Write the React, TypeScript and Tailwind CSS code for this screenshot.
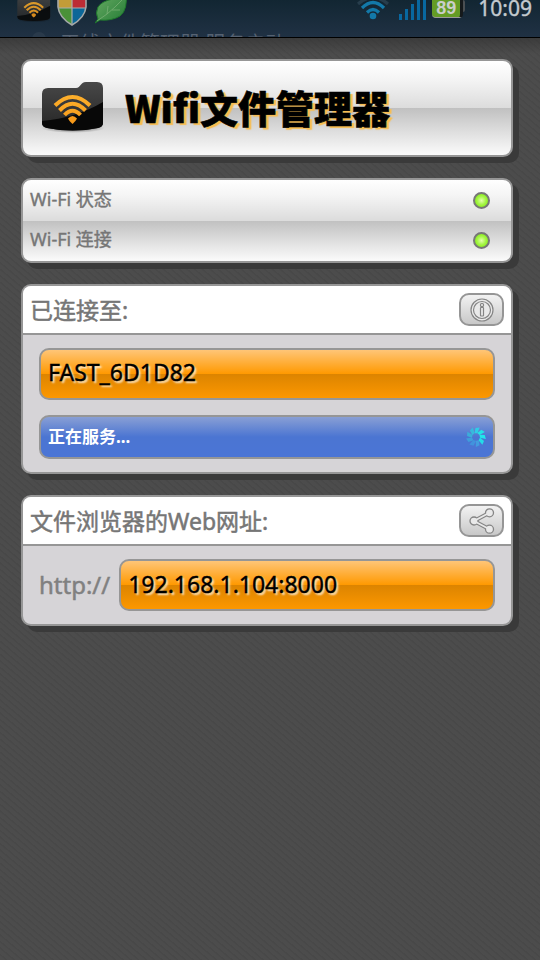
import type { ReactNode } from 'react';

const card =
  'overflow-hidden rounded-[10px] border-2 border-[#969696] shadow-[6px_6px_0_#3a3a3a]';
const gloss =
  'bg-[linear-gradient(to_bottom,#ffffff_0%,#f4f4f4_20%,#dcdcdc_50%,#c0c0c0_50%,#dedede_75%,#fbfbfb_100%)]';
const orange =
  'h-[52px] min-w-0 rounded-[10px] border-2 border-[#969696] bg-[linear-gradient(to_bottom,#ffc981_0%,#ff9900_50%,#dc8400_50%,#ff9900_100%)] bg-origin-border px-[7px] pb-[3px] text-[23px] leading-[45px] text-black [-webkit-text-stroke:0.4px_#000] [text-shadow:2px_2px_2px_#ffffffcc]';

function FolderWifi({ id, className }: { id: string; className: string }) {
  return (
    <svg viewBox="0 0 66 52" className={className} aria-hidden="true">
      <defs>
        <linearGradient id={`${id}-body`} x1="0" y1="0" x2="0" y2="1">
          <stop offset="0" stopColor="#484848" />
          <stop offset="1" stopColor="#252525" />
        </linearGradient>
        <linearGradient id={`${id}-wave`} gradientUnits="userSpaceOnUse" x1="0" y1="12" x2="0" y2="42">
          <stop offset="0" stopColor="#fdb02c" />
          <stop offset="1" stopColor="#f79a1a" />
        </linearGradient>
        <radialGradient id={`${id}-glow`}>
          <stop offset="0" stopColor="#000" stopOpacity="0.6" />
          <stop offset="1" stopColor="#000" stopOpacity="0" />
        </radialGradient>
      </defs>
      <ellipse cx="33" cy="46" rx="32" ry="5" fill={`url(#${id}-glow)`} />
      <path
        d="M2 12Q2 6 8 6H36C41 6 40 0 46 0H57Q63 0 63 6V41Q63 45 58 46Q33 51 7 46Q2 45 2 41Z"
        fill={`url(#${id}-body)`}
      />
      <path d="M2 39Q36 36 63 20V41Q63 45 58 46Q33 51 7 46Q2 45 2 41Z" fill="#080808" />
      <g fill="none" stroke={`url(#${id}-wave)`} strokeWidth="4">
        <path d="M15 23.500Q32.500 6.500 50 23.500" />
        <path d="M19.500 28.500Q32.500 15 45.500 28.500" />
        <path d="M24.500 33Q32.500 24.500 40.500 33" />
      </g>
      <path d="M28 36.500Q32.500 31.500 37 36.500Q36 39 32.500 42Q29 39 28 36.500Z" fill="#f79a1a" />
    </svg>
  );
}

function Shield() {
  return (
    <svg width="30" height="32" viewBox="0 0 30 32" aria-hidden="true">
      <clipPath id="shield-shape">
        <path d="M1 0H29V13C28 22 22 27 15 31C8 27 2 22 1 13Z" />
      </clipPath>
      <g clipPath="url(#shield-shape)">
        <path d="M0 0H15V14H0Z" fill="#c39c38" />
        <path d="M15 0H30V14H15Z" fill="#bc2c35" />
        <path d="M0 14H15V32H0Z" fill="#4a9138" />
        <path d="M15 14H30V32H15Z" fill="#0c6798" />
        <path d="M15 0V32M0 14H30" stroke="#a9adad" strokeWidth="1.200" />
      </g>
      <path d="M1 0V13C2 22 8 27 15 31C22 27 28 22 29 13V0" fill="none" stroke="#a4a8a8" strokeWidth="1.600" />
    </svg>
  );
}

function Leaf() {
  return (
    <svg width="34" height="30" viewBox="0 0 34 30" aria-hidden="true">
      <defs>
        <linearGradient id="leaf-fill" x1="0" y1="0" x2="1" y2="1">
          <stop offset="0" stopColor="#6cae66" />
          <stop offset="1" stopColor="#237b35" />
        </linearGradient>
      </defs>
      <path d="M0 29L3 25Q0 19 3 13Q7 7 18 5L31 -2Q33 16 25 22Q17 27 5 26Z" fill="url(#leaf-fill)" stroke="#1f7a2c" />
      <path d="M2 27Q13 20 20 13L30 3M12 20L13 12M17 16L25 16" fill="none" stroke="#79b075" strokeWidth="0.800" />
    </svg>
  );
}

function StatusBar() {
  return (
    <header className="relative h-[38px] overflow-hidden border-b border-black bg-[linear-gradient(to_bottom,#122632,#203144)]">
      <div className="flex h-9 items-start justify-between pr-2 pl-4">
        <div className="flex items-start">
          <FolderWifi id="notice" className="-mt-[5px] h-[28px] w-[36px] opacity-85" />
          <div className="-mt-1.5 ml-[5px]"><Shield /></div>
          <div className="-mt-1.5 ml-2"><Leaf /></div>
        </div>
        <div className="flex items-start">
          <svg width="32" height="20" viewBox="0 0 32 20" fill="none" strokeWidth="3.200" aria-label="Wi-Fi">
            <path d="M1 4Q16 -9 31 4" stroke="#273d4c" />
            <path d="M5 8Q16 -3 27 8" stroke="#1379a9" />
            <path d="M10 12.500Q16 6.500 22 12.500" stroke="#1379a9" />
            <circle cx="16" cy="16" r="3.300" fill="#1379a9" />
          </svg>
          <svg width="28" height="20" viewBox="0 0 28 20" fill="#0868a0" className="ml-[9px]" aria-label="signal">
            <path d="M1 14H4V20H1ZM7 9H10V20H7ZM13 4H16V20H13ZM19 0H22V20H19ZM25 0H28V20H25Z" />
          </svg>
          <div className="ml-[6px] flex items-start">
            <div className="h-[18px] w-[31px] rounded-b-sm border-r-[3px] border-b border-r-[#15191b] border-b-[#9a9a9a] bg-[#649c25] text-center font-['Liberation_Sans',sans-serif] text-[18px] leading-4 font-bold text-[#c9cec9]">89</div>
            <div className="h-3 w-0.5 rounded-r bg-[#4a4f52]" />
          </div>
          <time className="-mt-1 ml-[13px] text-[21px] leading-6 text-[#c3c9ce] [-webkit-text-stroke:0.4px_#c3c9ce]">10:09</time>
        </div>
      </div>
      <div className="absolute top-[32px] left-8 flex items-start gap-[14px]">
        <span className="h-5 w-3.5 rounded-full bg-[#2a3a4b]" />
        <p className="text-[20px] leading-6 whitespace-nowrap text-[#566272]">无线文件管理器 服务启动</p>
      </div>
    </header>
  );
}

function StatusRow({ label }: { label: string }) {
  return (
    <li className="flex h-10 items-center justify-between pr-[21px] pl-[7px] text-[18px] leading-6 text-[#767676] [-webkit-text-stroke:0.4px_#767676]">
      <span className="pb-0.5">{label}</span>
      <span className="size-[17px] rounded-full border-2 border-[#777777] bg-[radial-gradient(circle,#e4ffac_0%,#a6f647_45%,#8bed20_75%)]" />
    </li>
  );
}

function Panel({ title, action, icon, children }: { title: string; action: string; icon: ReactNode; children: ReactNode }) {
  return (
    <section className={`${card} bg-[#d6d4d7]`}>
      <div className="flex h-[49px] items-center justify-between border-b-2 border-[#969696] bg-white px-[7px]">
        <h2 className="text-[23px] leading-8 text-[#767676] [-webkit-text-stroke:0.5px_#767676]">{title}</h2>
        <button
          type="button"
          aria-label={action}
          className="flex h-[33px] w-[45px] items-center justify-center rounded-[10px] border-2 border-[#969696] bg-[linear-gradient(to_bottom,#f2f2f2,#c8c8c8)]"
        >
          {icon}
        </button>
      </div>
      <div className="flex flex-col gap-[15px] px-4 py-[13px]">{children}</div>
    </section>
  );
}

function InfoIcon() {
  return (
    <svg width="24" height="24" viewBox="0 0 24 24" fill="#e9e9e9" stroke="#858585" strokeWidth="1.200">
      <circle cx="12" cy="12" r="11" />
      <circle cx="12" cy="12" r="8.500" />
      <rect x="10.500" y="5.500" width="3" height="3" rx="1" />
      <rect x="10.500" y="9.500" width="3" height="8.500" rx="0.500" />
    </svg>
  );
}

function ShareIcon() {
  return (
    <svg width="26" height="26" viewBox="0 0 26 26" fill="#e9e9e9">
      <path d="M20 5L5 13L20 21" fill="none" stroke="#858585" strokeWidth="4" />
      <g stroke="#858585" strokeWidth="1.300">
        <circle cx="20.500" cy="4.800" r="4" />
        <circle cx="5" cy="13" r="4" />
        <circle cx="20.500" cy="21.200" r="4" />
      </g>
      <path d="M20 5L5 13L20 21" fill="none" stroke="#e9e9e9" strokeWidth="1.800" />
    </svg>
  );
}

const blades = ['#30cce6', '#23e3e6', '#22e6ea', '#24dce8', '#439cdf', '#4193dd', '#3f9edb', '#3badd9', '#38b9dc'];

function Spinner() {
  return (
    <svg width="20" height="20" viewBox="-10 -10 20 20" aria-hidden="true">
      {blades.map((color, i) => (
        <path key={color} d="M-1.500 -3.800L-0.500 -9L3.600 -9.400L1.500 -3.800Z" fill={color} transform={`rotate(${i * 40})`} />
      ))}
    </svg>
  );
}

export default function App() {
  return (
    <div className="min-h-screen bg-[#4a4a4a] bg-[repeating-linear-gradient(40deg,#4c4c4c_0px,#4c4c4c_3px,#484848_4px,#484848_5px)] font-['Noto_Sans','Noto_Sans_CJK_SC',sans-serif]">
      <StatusBar />
      <main className="flex flex-col gap-[21px] bg-[linear-gradient(to_bottom,#30303099,#30303000_16px)] pt-[21px] pr-[27px] pb-8 pl-[21px]">
        <div className={`${card} ${gloss} flex h-[98px] items-center gap-[19px] pl-[17px]`}>
          <FolderWifi id="brand" className="h-[52px] w-[66px] shrink-0" />
          <h1 className="pb-0.5 font-['Noto_Sans_CJK_SC',sans-serif] text-[38px] leading-[48px] font-black whitespace-nowrap text-black [-webkit-text-stroke:0.6px_#000] [text-shadow:3px_2px_1px_#f8bd50]">
            Wifi文件管理器
          </h1>
        </div>

        <ul className={`${card} ${gloss} h-[85px]`}>
          <StatusRow label="Wi-Fi 状态" />
          <StatusRow label="Wi-Fi 连接" />
        </ul>

        <Panel title="已连接至:" action="信息" icon={<InfoIcon />}>
          <div className={orange}>FAST_6D1D82</div>
          <div className="flex h-11 items-center justify-between rounded-[10px] border-2 border-[#969696] bg-[linear-gradient(to_bottom,#8fa3d5_0%,#4b75d2_50%,#4b75d6_100%)] bg-origin-border px-[7px] text-[17px] leading-6 font-bold text-white">
            <span>正在服务...</span>
            <Spinner />
          </div>
        </Panel>

        <Panel title="文件浏览器的Web网址:" action="分享" icon={<ShareIcon />}>
          <div className="flex items-center gap-[9px]">
            <label htmlFor="address" className="text-[24px] leading-8 text-[#808080] [-webkit-text-stroke:0.5px_#808080]">http://</label>
            <input id="address" readOnly value="192.168.1.104:8000" className={`${orange} flex-1`} />
          </div>
        </Panel>
      </main>
    </div>
  );
}
